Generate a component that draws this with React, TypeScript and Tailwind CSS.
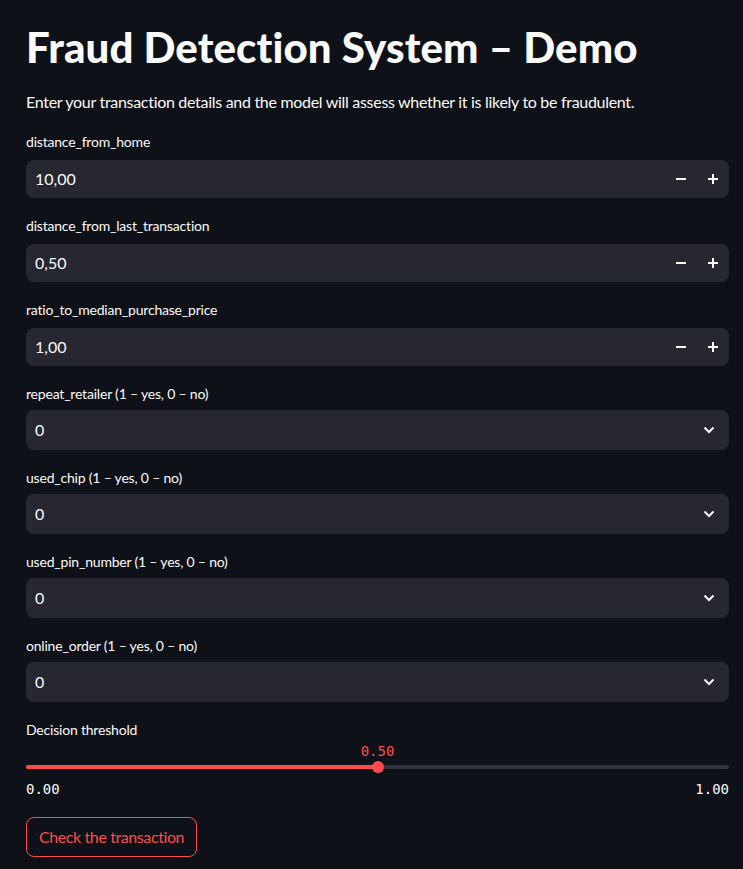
import React, { useState } from 'react';

const sans = { fontFamily: 'Lato, "Noto Sans", sans-serif' };

interface NumProps {
  label: string;
  value: string;
}

const NumberField: React.FC<NumProps> = ({ label, value }) => (
  <div className="flex flex-col">
    <label className="h-[20px] text-[14px] leading-[20px] tracking-[-0.2px] text-[#fafafa]">{label}</label>
    <div className="mt-[8px] flex h-[38px] items-center rounded-lg bg-[#262730] pl-[9px]">
      <span className="flex-1 text-[16px] text-[#fafafa]">{value}</span>
      <button className="flex h-[38px] w-[32px] items-center justify-center text-[#fafafa]">
        <svg width="10" height="10" viewBox="0 0 10 10">
          <rect x="0" y="4" width="10" height="2" fill="currentColor" />
        </svg>
      </button>
      <button className="flex h-[38px] w-[32px] items-center justify-center text-[#fafafa]">
        <svg width="10" height="10" viewBox="0 0 10 10">
          <rect x="0" y="4" width="10" height="2" fill="currentColor" />
          <rect x="4" y="0" width="2" height="10" fill="currentColor" />
        </svg>
      </button>
    </div>
  </div>
);

const SelectField: React.FC<{ label: string }> = ({ label }) => (
  <div className="flex flex-col">
    <label className="h-[20px] text-[14px] leading-[20px] tracking-[-0.2px] text-[#fafafa]">{label}</label>
    <div className="mt-[6px] flex h-[40px] items-center rounded-lg bg-[#262730] pl-[9px] pr-[14px]">
      <span className="flex-1 text-[16px] text-[#fafafa]">0</span>
      <svg width="12" height="8" viewBox="0 0 12 8" className="text-[#fafafa]">
        <path d="M1.5 1.5 L6 6 L10.5 1.5" stroke="currentColor" strokeWidth="2" fill="none" />
      </svg>
    </div>
  </div>
);

export default function App() {
  const [threshold] = useState(0.5);
  const pct = threshold * 100;

  return (
    <div className="min-h-[869px] bg-[#0e1117] pl-[26px] pr-[14px]" style={sans}>
      <h1 className="pt-[22px] text-[42px] font-black leading-[50px] tracking-[0.1px] text-[#fafafa]">
        Fraud Detection System – Demo
      </h1>
      <p className="mt-[18px] text-[16px] leading-[24px] tracking-[-0.3px] text-[#fafafa]">
        Enter your transaction details and the model will assess whether it is likely to be fraudulent.
      </p>

      <div className="mt-[18px] flex flex-col gap-[18px]">
        <NumberField label="distance_from_home" value="10,00" />
        <NumberField label="distance_from_last_transaction" value="0,50" />
        <NumberField label="ratio_to_median_purchase_price" value="1,00" />
        <SelectField label="repeat_retailer (1 – yes, 0 – no)" />
        <SelectField label="used_chip (1 – yes, 0 – no)" />
        <SelectField label="used_pin_number (1 – yes, 0 – no)" />
        <SelectField label="online_order (1 – yes, 0 – no)" />
      </div>

      <div className="mt-[18px] flex flex-col">
        <label className="h-[20px] text-[14px] leading-[20px] tracking-[-0.2px] text-[#fafafa]">Decision threshold</label>
        <div className="relative mt-[2px] h-[34px]">
          <div
            className="absolute top-0 -translate-x-1/2 text-[14px] leading-[18px] text-[#ff4b4b]"
            style={{ left: `${pct}%`, fontFamily: '"DejaVu Sans Mono", monospace' }}
          >
            {threshold.toFixed(2)}
          </div>
          <div className="absolute left-0 right-0 top-[23px] h-[4px] rounded-full bg-[#31333f]" />
          <div className="absolute left-0 top-[23px] h-[4px] rounded-full bg-[#ff4b4b]" style={{ width: `${pct}%` }} />
          <div
            className="absolute top-[19px] h-[12px] w-[12px] -translate-x-1/2 rounded-full bg-[#ff4b4b]"
            style={{ left: `${pct}%` }}
          />
        </div>
        <div
          className="mt-[4px] flex justify-between text-[14px] leading-[18px] text-[#fafafa]"
          style={{ fontFamily: '"DejaVu Sans Mono", monospace' }}
        >
          <span>0.00</span>
          <span>1.00</span>
        </div>
      </div>

      <button className="mt-[19px] h-[40px] rounded-lg border border-[#ff4b4b] px-[12px] text-[16px] tracking-[-0.4px] text-[#ff4b4b]">
        Check the transaction
      </button>
    </div>
  );
}
